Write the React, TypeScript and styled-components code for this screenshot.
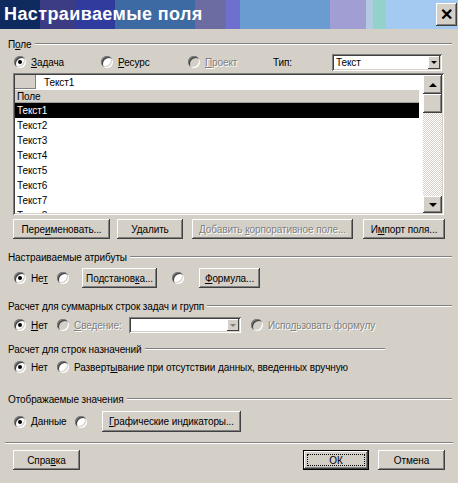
import React from "react";
import styled, { createGlobalStyle, css } from "styled-components";

const FACE = "#d4d0c8";

const GlobalStyle = createGlobalStyle`
  html, body {
    margin: 0;
    padding: 0;
    background: ${FACE};
  }
  body {
    font-family: "Liberation Sans", Arial, sans-serif;
    font-size: 10px;
    letter-spacing: -0.1px;
    color: #000;
  }
`;

const raised = css`
  box-shadow: inset -1px -1px #404040, inset 1px 1px #fff,
    inset -2px -2px #808080, inset 2px 2px ${FACE};
`;

const sunken = css`
  box-shadow: inset 1px 1px #808080, inset -1px -1px #fff,
    inset 2px 2px #404040, inset -2px -2px ${FACE};
`;

const Window = styled.div`
  width: 458px;
  height: 483px;
  background: ${FACE};
  display: flex;
  flex-direction: column;
  overflow: hidden;
`;

const TitleBar = styled.div`
  height: 29px;
  flex: none;
  display: flex;
  align-items: center;
  justify-content: space-between;
  padding: 0 1px 0 4px;
  background: linear-gradient(
    to right,
    #0e2a5e 0 40px,
    #3c3c84 40px 75px,
    #2f3c9e 75px 115px,
    #3d6aa2 115px 195px,
    #6c6ca2 195px 226px,
    #6f6fd0 226px 240px,
    #6a9cd2 240px 330px,
    #a09ed2 330px 366px,
    #b2cae2 366px 373px,
    #92d2ca 373px 386px,
    #a4caf2 386px
  );
`;

const Title = styled.span`
  color: #fff;
  font-weight: bold;
  font-size: 18px;
  letter-spacing: 0.4px;
`;

const CloseBox = styled.div`
  width: 21px;
  height: 23px;
  background: ${FACE};
  ${raised};
  display: flex;
  align-items: center;
  justify-content: center;
  font-weight: bold;
  font-size: 16px;
`;

const Body = styled.div`
  display: flex;
  flex-direction: column;
  padding: 0 6px 0 8px;
`;

const GroupHeader = styled.div<{ $mt: number; $w?: number }>`
  display: flex;
  align-items: center;
  height: 14px;
  margin-top: ${(p) => p.$mt}px;
  width: ${(p) => (p.$w ? `${p.$w}px` : "auto")};
`;

const Rule = styled.div`
  flex: 1;
  margin-left: 3px;
  border-top: 1px solid #808080;
  border-bottom: 1px solid #fff;
`;

const Row = styled.div<{ $mt: number; $h: number }>`
  display: flex;
  align-items: center;
  height: ${(p) => p.$h}px;
  margin-top: ${(p) => p.$mt}px;
  padding-left: 6px;
`;

const U = styled.span`
  text-decoration: underline;
`;

const Dim = styled.span`
  color: #808080;
  text-shadow: 1px 1px #fff;
`;

const RadioCircle = styled.span<{ $checked?: boolean; $disabled?: boolean; $ml?: number }>`
  position: relative;
  flex: none;
  width: 12px;
  height: 12px;
  border-radius: 50%;
  margin-left: ${(p) => p.$ml ?? 0}px;
  background: ${(p) => (p.$disabled ? FACE : "#fff")};
  box-shadow: inset 1px 1px #808080, inset -1px -1px #fff,
    inset 2px 2px #404040, inset -2px -2px ${FACE};
  &::after {
    content: "";
    display: ${(p) => (p.$checked ? "block" : "none")};
    position: absolute;
    left: 4px;
    top: 4px;
    width: 4px;
    height: 4px;
    border-radius: 50%;
    background: #000;
  }
`;

const Option = styled.label<{ $w?: number }>`
  display: flex;
  align-items: center;
  gap: 5px;
  width: ${(p) => (p.$w ? `${p.$w}px` : "auto")};
  flex: none;
  white-space: nowrap;
`;

const Btn = styled.button<{ $w: number; $h?: number; $ml?: number; $default?: boolean }>`
  position: relative;
  flex: none;
  width: ${(p) => p.$w}px;
  height: ${(p) => p.$h ?? 20}px;
  margin-left: ${(p) => p.$ml ?? 0}px;
  padding: 0;
  border: none;
  background: ${FACE};
  font: inherit;
  letter-spacing: inherit;
  color: #000;
  white-space: nowrap;
  ${raised};
  ${(p) =>
    p.$default &&
    css`
      outline: 1px solid #000;
      outline-offset: -1px;
      box-shadow: inset -2px -2px #404040, inset 2px 2px #fff,
        inset -3px -3px #808080;
      &::after {
        content: "";
        position: absolute;
        inset: 4px;
        border: 1px dotted #000;
      }
    `}
`;

const Combo = styled.div<{ $w: number; $h: number; $ml?: number }>`
  flex: none;
  display: flex;
  align-items: center;
  width: ${(p) => p.$w}px;
  height: ${(p) => p.$h}px;
  margin-left: ${(p) => p.$ml ?? 0}px;
  padding: 2px;
  box-sizing: border-box;
  background: #fff;
  ${sunken};
`;

const ComboText = styled.span`
  flex: 1;
  padding-left: 2px;
`;

const ComboArrow = styled.span<{ $disabled?: boolean }>`
  flex: none;
  align-self: stretch;
  width: 12px;
  background: ${FACE};
  box-shadow: inset -1px -1px #404040, inset 1px 1px #fff;
  display: flex;
  align-items: center;
  justify-content: center;
  &::before {
    content: "";
    border-left: 3px solid transparent;
    border-right: 3px solid transparent;
    border-top: 3px solid ${(p) => (p.$disabled ? "#808080" : "#000")};
  }
`;

const GridFrame = styled.div`
  margin: 3px 0 0 5px;
  width: 431px;
  height: 142px;
  padding: 2px;
  box-sizing: border-box;
  background: #fff;
  ${sunken};
  display: flex;
`;

const List = styled.div`
  flex: 1;
  display: flex;
  flex-direction: column;
  overflow: hidden;
  background: #fff;
`;

const EditRow = styled.div`
  flex: none;
  height: 14px;
  display: flex;
  align-items: center;
`;

const EditCell = styled.div`
  width: 21px;
  height: 14px;
  box-sizing: border-box;
  background: ${FACE};
  border-right: 1px solid #808080;
  border-bottom: 1px solid #808080;
`;

const EditText = styled.span`
  padding-left: 8px;
`;

const HeaderRow = styled.div`
  flex: none;
  height: 14px;
  margin-right: 4px;
  padding-left: 2px;
  box-sizing: border-box;
  display: flex;
  align-items: center;
  background: ${FACE};
  border-top: 1px solid #fff;
  border-bottom: 1px solid #a0a0a0;
`;

const ListRow = styled.div<{ $selected?: boolean }>`
  flex: none;
  height: 15px;
  margin-right: 4px;
  padding-left: 2px;
  display: flex;
  align-items: center;
  background: ${(p) => (p.$selected ? "#000" : "transparent")};
  color: ${(p) => (p.$selected ? "#fff" : "#000")};
`;

const ScrollBar = styled.div`
  flex: none;
  width: 19px;
  display: flex;
  flex-direction: column;
`;

const ScrollBtn = styled.div<{ $h: number; $dir: "up" | "down" }>`
  flex: none;
  height: ${(p) => p.$h}px;
  background: ${FACE};
  ${raised};
  display: flex;
  align-items: center;
  justify-content: center;
  &::before {
    content: "";
    border-left: 4px solid transparent;
    border-right: 4px solid transparent;
    ${(p) =>
      p.$dir === "up"
        ? "border-bottom: 4px solid #000;"
        : "border-top: 4px solid #000;"}
  }
`;

const Thumb = styled.div`
  flex: none;
  height: 19px;
  background: ${FACE};
  ${raised};
`;

const Track = styled.div`
  flex: 1;
  background: repeating-conic-gradient(${FACE} 0 25%, #fff 0 50%) 0 0 / 2px 2px;
`;

const ButtonRow = styled.div<{ $mt: number }>`
  display: flex;
  align-items: center;
  margin-top: ${(p) => p.$mt}px;
  padding-left: 5px;
`;

const Separator = styled.div`
  margin: 10px 0 0 -3px;
  width: 448px;
  border-top: 1px solid #808080;
  border-bottom: 1px solid #fff;
`;

const Footer = styled.div`
  display: flex;
  align-items: center;
  margin-top: 6px;
  padding: 0 7px 0 5px;
`;

const Spacer = styled.div`
  flex: 1;
`;

const TypeLabel = styled.span`
  width: 59px;
  flex: none;
`;

const rows = ["Текст1", "Текст2", "Текст3", "Текст4", "Текст5", "Текст6", "Текст7", "Текст8"];

export default function App() {
  return (
    <Window>
      <GlobalStyle />
      <TitleBar>
        <Title>Настраиваемые поля</Title>
        <CloseBox>✕</CloseBox>
      </TitleBar>
      <Body>
        <GroupHeader $mt={8}>
          <span>
            П<U>о</U>ле
          </span>
          <Rule />
        </GroupHeader>
        <Row $mt={3} $h={16}>
          <Option $w={87}>
            <RadioCircle $checked />
            <span>
              <U>З</U>адача
            </span>
          </Option>
          <Option $w={87}>
            <RadioCircle />
            <span>
              <U>Р</U>есурс
            </span>
          </Option>
          <Option $w={85}>
            <RadioCircle $disabled />
            <Dim>
              <U>П</U>роект
            </Dim>
          </Option>
          <TypeLabel>Тип:</TypeLabel>
          <Combo $w={110} $h={17}>
            <ComboText>Текст</ComboText>
            <ComboArrow />
          </Combo>
        </Row>
        <GridFrame>
          <List>
            <EditRow>
              <EditCell />
              <EditText>Текст1</EditText>
            </EditRow>
            <HeaderRow>Поле</HeaderRow>
            {rows.map((r, i) => (
              <ListRow key={r} $selected={i === 0}>
                {r}
              </ListRow>
            ))}
          </List>
          <ScrollBar>
            <ScrollBtn $h={19} $dir="up" />
            <Thumb />
            <Track />
            <ScrollBtn $h={17} $dir="down" />
          </ScrollBar>
        </GridFrame>
        <ButtonRow $mt={4}>
          <Btn $w={97}>
            Пере<U>и</U>меновать...
          </Btn>
          <Btn $w={66} $ml={7}>
            Удалить
          </Btn>
          <Btn $w={161} $ml={9}>
            <Dim>
              Добавить <U>к</U>орпоративное поле...
            </Dim>
          </Btn>
          <Btn $w={82} $ml={10}>
            И<U>м</U>порт поля...
          </Btn>
        </ButtonRow>

        <GroupHeader $mt={11}>
          <span>Настраиваемые атрибуты</span>
          <Rule />
        </GroupHeader>
        <Row $mt={4} $h={20}>
          <Option $w={43}>
            <RadioCircle $checked />
            <span>
              Не<U>т</U>
            </span>
          </Option>
          <RadioCircle />
          <Btn $w={75} $ml={13}>
            Подстанов<U>к</U>а...
          </Btn>
          <RadioCircle $ml={15} />
          <Btn $w={61} $ml={15}>
            <U>Ф</U>ормула...
          </Btn>
        </Row>

        <GroupHeader $mt={11}>
          <span>Расчет для суммарных строк задач и групп</span>
          <Rule />
        </GroupHeader>
        <Row $mt={4} $h={16}>
          <Option $w={43}>
            <RadioCircle $checked />
            <span>
              <U>Н</U>ет
            </span>
          </Option>
          <Option $w={72}>
            <RadioCircle $disabled />
            <Dim>
              <U>С</U>ведение:
            </Dim>
          </Option>
          <Combo $w={112} $h={16}>
            <ComboText />
            <ComboArrow $disabled />
          </Combo>
          <Option>
            <RadioCircle $disabled $ml={10} />
            <Dim>
              Испо<U>л</U>ьзовать формулу
            </Dim>
          </Option>
        </Row>

        <GroupHeader $mt={9} $w={377}>
          <span>Расчет для строк назначений</span>
          <Rule />
        </GroupHeader>
        <Row $mt={3} $h={16}>
          <Option $w={43}>
            <RadioCircle $checked />
            <span>Нет</span>
          </Option>
          <Option>
            <RadioCircle />
            <span>
              Разверт<U>ы</U>вание при отсутствии данных, введенных вручную
            </span>
          </Option>
        </Row>

        <GroupHeader $mt={17}>
          <span>Отображаемые значения</span>
          <Rule />
        </GroupHeader>
        <Row $mt={5} $h={21}>
          <Option $w={61}>
            <RadioCircle $checked />
            <span>
              <U>Д</U>анные
            </span>
          </Option>
          <RadioCircle />
          <Btn $w={139} $h={21} $ml={15}>
            <U>Г</U>рафические индикаторы...
          </Btn>
        </Row>

        <Separator />
        <Footer>
          <Btn $w={67}>
            Спра<U>в</U>ка
          </Btn>
          <Spacer />
          <Btn $w={66} $default>
            ОК
          </Btn>
          <Btn $w={67} $ml={9}>
            Отмена
          </Btn>
        </Footer>
      </Body>
    </Window>
  );
}
